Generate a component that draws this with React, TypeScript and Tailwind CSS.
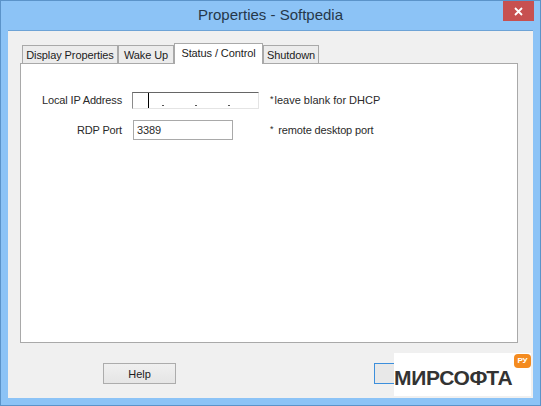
const sans = { fontFamily: '"Liberation Sans", Arial, sans-serif' };

function Tab({ label, active, className }: { label: string; active?: boolean; className: string }) {
  return (
    <div
      className={`flex items-center justify-center whitespace-nowrap border border-b-0 border-[#a9a9a9] text-[11px] tracking-[-0.1px] text-[#1c1c1c] ${
        active ? 'relative z-10 -mb-px h-[21px] bg-white pb-[2px]' : 'h-[18px] bg-[#ececec] pt-px'
      } ${className}`}
    >
      {label}
    </div>
  );
}

export default function App() {
  return (
    <div className="relative h-[406px] w-[541px] overflow-hidden border border-[#5b93c9] bg-[#8cc3f6]" style={sans}>
      {/* Title bar */}
      <div className="relative flex h-[29px] items-center justify-center">
        <span className="text-[15px] text-[#25384a]">Properties - Softpedia</span>
        <div className="absolute right-[6px] top-0 flex h-[20px] w-[31px] items-center justify-center bg-[#c75050]">
          <svg width="9" height="9" viewBox="0 0 9 9">
            <path d="M1 1 L8 8 M8 1 L1 8" stroke="#fff" strokeWidth="1.8" />
          </svg>
        </div>
      </div>

      {/* Client area */}
      <div className="mx-[7px] flex h-[368px] flex-col border-t border-[#6da3d6] bg-[#f0f0f0] pl-[12px] pr-[15px] pt-[12px]">
        <div className="flex items-end pl-[2px]">
          <Tab label="Display Properties" className="w-[96px]" />
          <Tab label="Wake Up" className="w-[56px]" />
          <Tab label="Status / Control" active className="w-[89px]" />
          <Tab label="Shutdown" className="w-[56px]" />
        </div>

        {/* Panel */}
        <div className="h-[280px] w-[498px] border border-[#a9a9a9] bg-white pt-[26px] text-[11px] tracking-[-0.15px] text-[#2a2a2a]">
          <div className="flex h-[20px] items-center">
            <div className="w-[101px] text-right">Local IP Address</div>
            <div className="ml-[10px] flex h-[17px] w-[127px] items-end border border-b-[#e4e4e4] border-l-[#8a8a8a] border-r-[#e4e4e4] border-t-[#666666]">
              <div className="ml-[15px] h-[15px] w-px bg-black" />
              <div className="mb-[2px] ml-[13px] h-px w-[2px] bg-[#555555]" />
              <div className="mb-[2px] ml-[31px] h-px w-[2px] bg-[#555555]" />
              <div className="mb-[2px] ml-[31px] h-px w-[2px] bg-[#555555]" />
            </div>
            <div className="ml-[11px] tracking-normal">
              <span className="relative -top-[2px] mr-px text-[9px]">*</span>leave blank for DHCP
            </div>
          </div>
          <div className="mt-[10px] flex h-[20px] items-center">
            <div className="w-[101px] text-right">RDP Port</div>
            <div className="ml-[11px] flex h-[20px] w-[100px] items-center border border-[#a9a9a9] pl-[3px]">3389</div>
            <div className="ml-[37px]">
              <span className="relative -top-[2px] mr-[5px] text-[9px]">*</span>remote desktop port
            </div>
          </div>
        </div>

        {/* Buttons */}
        <div className="mt-[20px] flex pl-[83px]">
          <div className="flex h-[21px] w-[73px] items-center justify-center border border-[#acacac] bg-gradient-to-b from-[#f0f0f0] to-[#e5e5e5] pt-px text-[11px] text-[#1c1c1c]">
            Help
          </div>
          <div className="ml-[198px] h-[21px] w-[73px] border border-[#3c8fdc] bg-[#e8e8e8]" />
        </div>
      </div>

      {/* Watermark */}
      <div className="absolute left-[393px] top-[352px] flex h-[43px] w-[137px] items-end bg-white pb-[6px]">
        <span className="text-[21px] font-bold leading-[24px] tracking-[-0.3px] text-[#333333]">МИРСОФТА</span>
        <div className="absolute right-0 top-[1px] flex h-[14px] w-[17px] items-center justify-center rounded-[4px] bg-[#f48b1f] text-[8px] font-bold text-white">
          РУ
        </div>
      </div>
    </div>
  );
}
